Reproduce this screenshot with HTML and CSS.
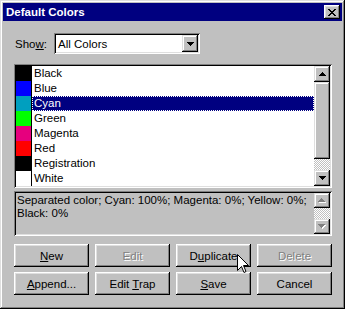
FILE: index.html
```html
<!DOCTYPE html>
<html lang="en">
<head>
    <meta charset="UTF-8">
    <title>Default Colors</title>
    <link rel="stylesheet" href="styles.css">
</head>
<body>
    <div class="window">
        <div class="titlebar">
            <span class="title">Default Colors</span>
            <span class="close">
                <svg width="8" height="7" viewBox="0 0 8 7" shape-rendering="crispEdges">
                    <path d="M0 0h2v1h-2zM6 0h2v1h-2zM1 1h2v1h-2zM5 1h2v1h-2zM2 2h4v1h-4zM3 3h2v1h-2zM2 4h4v1h-4zM1 5h2v1h-2zM5 5h2v1h-2zM0 6h2v1h-2zM6 6h2v1h-2z" fill="#000"/>
                </svg>
            </span>
        </div>

        <div class="content">
            <div class="show-row">
                <label class="show-label">Sho<u>w</u>:</label>
                <div class="select">
                    <span class="select-text">All Colors</span>
                    <span class="drop-btn">
                        <svg width="7" height="4" viewBox="0 0 7 4" shape-rendering="crispEdges"><path d="M0 0h7v1h-7zM1 1h5v1h-5zM2 2h3v1h-3zM3 3h1v1h-1z" fill="#000"/></svg>
                    </span>
                </div>
            </div>

            <div class="listbox">
                <ul class="colors">
                    <li><span class="swatch" style="background:#000000"></span><span class="name">Black</span></li>
                    <li><span class="swatch" style="background:#0000ff"></span><span class="name">Blue</span></li>
                    <li class="selected"><span class="swatch" style="background:#009fbf"></span><span class="name">Cyan</span></li>
                    <li><span class="swatch" style="background:#00ff00"></span><span class="name">Green</span></li>
                    <li><span class="swatch" style="background:#e6007e"></span><span class="name">Magenta</span></li>
                    <li><span class="swatch" style="background:#ff0000"></span><span class="name">Red</span></li>
                    <li><span class="swatch" style="background:#000000"></span><span class="name">Registration</span></li>
                    <li><span class="swatch" style="background:#ffffff"></span><span class="name">White</span></li>
                </ul>
                <div class="vscroll">
                    <span class="sbtn">
                        <svg width="7" height="4" viewBox="0 0 7 4" shape-rendering="crispEdges"><path d="M3 0h1v1h-1zM2 1h3v1h-3zM1 2h5v1h-5zM0 3h7v1h-7z" fill="#000"/></svg>
                    </span>
                    <span class="thumb"></span>
                    <span class="track"></span>
                    <span class="sbtn">
                        <svg width="7" height="4" viewBox="0 0 7 4" shape-rendering="crispEdges"><path d="M0 0h7v1h-7zM1 1h5v1h-5zM2 2h3v1h-3zM3 3h1v1h-1z" fill="#000"/></svg>
                    </span>
                </div>
            </div>

            <div class="desc">
                <p class="desc-text">Separated color; Cyan: 100%; Magenta: 0%; Yellow: 0%;<br>Black: 0%</p>
                <div class="vscroll small">
                    <span class="sbtn off">
                        <svg width="8" height="5" viewBox="0 0 8 5" shape-rendering="crispEdges"><path d="M4 1h1v1h-1zM3 2h3v1h-3zM2 3h5v1h-5zM1 4h7v1h-7z" fill="#fff"/><path d="M3 0h1v1h-1zM2 1h3v1h-3zM1 2h5v1h-5zM0 3h7v1h-7z" fill="#808080"/></svg>
                    </span>
                    <span class="track grow"></span>
                    <span class="sbtn off">
                        <svg width="8" height="5" viewBox="0 0 8 5" shape-rendering="crispEdges"><path d="M1 1h7v1h-7zM2 2h5v1h-5zM3 3h3v1h-3zM4 4h1v1h-1z" fill="#fff"/><path d="M0 0h7v1h-7zM1 1h5v1h-5zM2 2h3v1h-3zM3 3h1v1h-1z" fill="#808080"/></svg>
                    </span>
                </div>
            </div>

            <div class="buttons">
                <button class="btn"><u>N</u>ew</button>
                <button class="btn disabled">Edit</button>
                <button class="btn">D<u>u</u>plicate</button>
                <button class="btn disabled">Delete</button>
                <button class="btn"><u>A</u>ppend...</button>
                <button class="btn">Edit <u>T</u>rap</button>
                <button class="btn"><u>S</u>ave</button>
                <button class="btn">Cancel</button>
            </div>
        </div>

        <svg class="cursor" width="12" height="20" viewBox="0 0 12 20">
            <path d="M0.5 0.5V16.5L4.5 12.5L7 18.5L9 17.5L6.5 11.5H11.5Z" fill="#fff" stroke="#000" stroke-width="1"/>
        </svg>
    </div>
</body>
</html>
```

FILE: styles.css
```css
body {
    margin: 0;
    padding: 0;
    background-color: #c0c0c0;
    font-family: "Liberation Sans", Arial, sans-serif;
    font-size: 11.5px;
    color: #000;
}
.window {
    position: relative;
    width: 345px;
    height: 309px;
    box-sizing: border-box;
    padding: 3px;
    background-color: #c0c0c0;
    box-shadow: inset -1px -1px #000, inset 1px 1px #dfdfdf, inset -2px -2px #808080, inset 2px 2px #fff;
}
.titlebar {
    height: 18px;
    background-color: #000080;
    color: #fff;
    display: flex;
    align-items: center;
    justify-content: space-between;
    padding: 0 2px 0 3px;
}
.title {
    font-weight: bold;
    font-size: 11.5px;
}
.close {
    width: 16px;
    height: 14px;
    box-sizing: border-box;
    background-color: #c0c0c0;
    display: flex;
    align-items: center;
    justify-content: center;
    padding-right: 1px;
    box-shadow: inset -1px -1px #000, inset 1px 1px #fff, inset -2px -2px #808080, inset 2px 2px #dfdfdf;
}
.content {
    padding: 0 10px 0 11px;
    display: flex;
    flex-direction: column;
}
.show-row {
    display: flex;
    align-items: center;
    margin-top: 12px;
}
.show-label {
    width: 39px;
    padding-left: 1px;
}
.select {
    width: 146px;
    height: 21px;
    box-sizing: border-box;
    background: #fff;
    display: flex;
    align-items: center;
    justify-content: space-between;
    padding: 2px;
    box-shadow: inset 1px 1px #808080, inset -1px -1px #fff, inset 2px 2px #000, inset -2px -2px #dfdfdf;
}
.select-text {
    padding-left: 2px;
}
.drop-btn,
.sbtn {
    width: 16px;
    height: 17px;
    box-sizing: border-box;
    background: #c0c0c0;
    display: flex;
    align-items: center;
    justify-content: center;
    box-shadow: inset -1px -1px #000, inset 1px 1px #dfdfdf, inset -2px -2px #808080, inset 2px 2px #fff;
}
.listbox {
    margin-top: 10px;
    height: 124px;
    box-sizing: border-box;
    padding: 2px;
    background: #fff;
    display: flex;
    box-shadow: inset 1px 1px #808080, inset -1px -1px #fff, inset 2px 2px #000, inset -2px -2px #dfdfdf;
}
.colors {
    flex: 1;
    list-style: none;
    margin: 0;
    padding: 0;
}
.colors li {
    display: flex;
    height: 15px;
    line-height: 15px;
}
.swatch {
    width: 15px;
    border-right: 1px solid #000;
}
.name {
    flex: 1;
    padding-left: 2px;
}
.selected .name {
    background: #000080;
    color: #fff;
    outline: 1px dotted #fff;
    outline-offset: -1px;
}
.vscroll {
    width: 16px;
    display: flex;
    flex-direction: column;
}
.vscroll .sbtn {
    height: 16px;
}
.thumb {
    height: 77px;
    background: #c0c0c0;
    box-shadow: inset -1px -1px #000, inset 1px 1px #dfdfdf, inset -2px -2px #808080, inset 2px 2px #fff;
}
.track {
    flex: 1;
    background: repeating-conic-gradient(#fff 0 25%, #c0c0c0 0 50%) 0 0 / 2px 2px;
}
.desc {
    margin-top: 3px;
    height: 45px;
    box-sizing: border-box;
    padding: 2px;
    display: flex;
    box-shadow: inset 1px 1px #808080, inset -1px -1px #fff, inset 2px 2px #000, inset -2px -2px #dfdfdf;
}
.desc-text {
    flex: 1;
    margin: 0;
    padding: 1px 0 0 1px;
    line-height: 13px;
}
.vscroll.small .sbtn {
    height: 15px;
}
.buttons {
    margin-top: 8px;
    display: grid;
    grid-template-columns: repeat(4, 75px);
    grid-auto-rows: 23px;
    gap: 5px 6px;
}
.btn {
    font-family: inherit;
    font-size: 11.5px;
    color: #000;
    background: #c0c0c0;
    border: none;
    padding: 0;
    box-shadow: inset -1px -1px #000, inset 1px 1px #fff, inset -2px -2px #808080, inset 2px 2px #dfdfdf;
}
.btn.disabled {
    color: #808080;
    text-shadow: 1px 1px #fff;
}
.cursor {
    position: absolute;
    left: 237px;
    top: 254px;
}
```
